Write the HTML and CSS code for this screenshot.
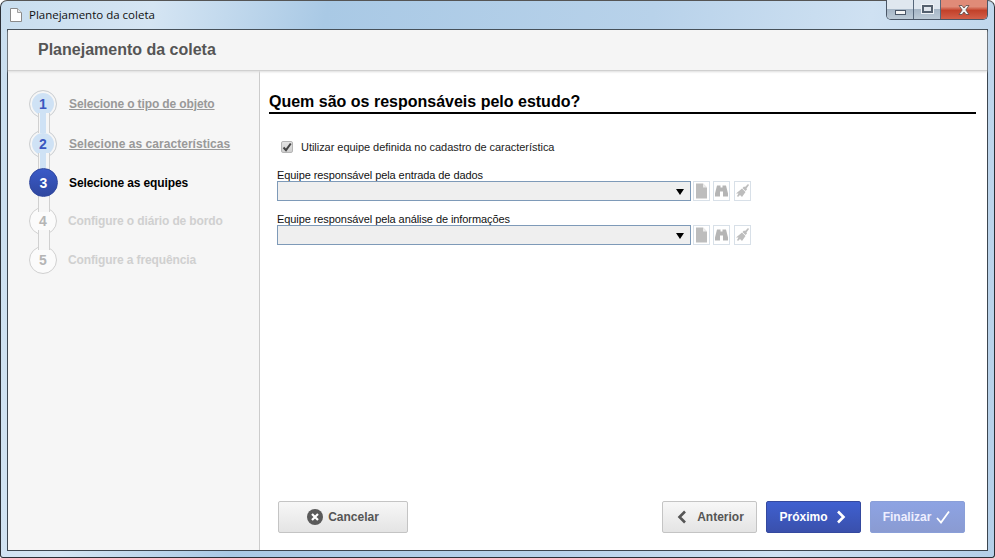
FILE: index.html
```html
<!DOCTYPE html>
<html lang="pt">
<head>
<meta charset="utf-8">
<title>Planejamento da coleta</title>
<link rel="stylesheet" href="styles.css">
</head>
<body>
<div class="window">
  <div class="titlebar">
    <svg class="doc-icon" width="12" height="14" viewBox="0 0 12 14"><path d="M.5.5h7l4 4v9H.5z" fill="#fff" stroke="#8a8a8a"/><path d="M7.500.5v4h4" fill="#e8e8e8" stroke="#a0a0a0"/></svg>
    <span class="title-text">Planejamento da coleta</span>
    <div class="controls">
      <div class="ctl ctl-min"><span class="min-glyph"></span></div>
      <div class="ctl ctl-max"><span class="max-glyph"></span></div>
      <div class="ctl ctl-close">
        <svg width="16" height="12" viewBox="0 0 16 12"><path d="M3 1.500h3l2 2.500 2-2.500h3L9.800 6 13 10.500h-3L8 8l-2 2.500H3L6.200 6z" fill="#f2f2f2" stroke="#5b4a48" stroke-width=".8"/></svg>
      </div>
    </div>
  </div>
  <div class="client">
    <header class="app-header"><h1>Planejamento da coleta</h1></header>
    <div class="body">
      <nav class="sidebar">
        <div class="step done"><span class="num">1</span><span class="lbl">Selecione o tipo de objeto</span></div>
        <div class="step done wide"><span class="num">2</span><span class="lbl">Selecione as características</span></div>
        <div class="step active"><span class="num">3</span><span class="lbl">Selecione as equipes</span></div>
        <div class="step off"><span class="num">4</span><span class="lbl">Configure o diário de bordo</span></div>
        <div class="step off last"><span class="num">5</span><span class="lbl">Configure a frequência</span></div>
      </nav>
      <main class="content">
        <h2>Quem são os responsáveis pelo estudo?</h2>
        <div class="check-row">
          <span class="checkbox"><svg width="10" height="10" viewBox="0 0 10 10"><path d="M1.500 5.500 4 8.200 8.800 1.500" fill="none" stroke="#444" stroke-width="2"/></svg></span>
          <span>Utilizar equipe definida no cadastro de característica</span>
        </div>
        <div class="field">
          <label class="field-label">Equipe responsável pela entrada de dados</label>
          <div class="field-row">
            <div class="select"><span class="arrow"></span></div>
            <span class="tool"><svg width="13" height="16" viewBox="0 0 13 16"><path d="M1 .5h7l4 4v11H1z" fill="#bdbdbd"/><path d="M8 .5v4h4z" fill="#ececec"/></svg></span>
            <span class="tool"><svg width="13" height="12" viewBox="0 0 13 12"><path d="M2 .5h3.500v2h2v-2H11l2 8v3H8V6.500H5v5H0v-3z" fill="#b5b5b5"/></svg></span>
            <span class="tool tool-last"><svg width="15" height="15" viewBox="0 0 15 15"><path d="M14 1l-1-1-3 3-1-.5-1.500 1.500 3 3L12 5.500 11.500 4.500z" fill="#bdbdbd"/><path d="M7 4.500l3.500 3.500L7 13 5 11l-2 2-1-1 1.500-2.500L1 9.500z" fill="#bdbdbd"/></svg></span>
          </div>
        </div>
        <div class="field">
          <label class="field-label">Equipe responsável pela análise de informações</label>
          <div class="field-row">
            <div class="select"><span class="arrow"></span></div>
            <span class="tool"><svg width="13" height="16" viewBox="0 0 13 16"><path d="M1 .5h7l4 4v11H1z" fill="#bdbdbd"/><path d="M8 .5v4h4z" fill="#ececec"/></svg></span>
            <span class="tool"><svg width="13" height="12" viewBox="0 0 13 12"><path d="M2 .5h3.500v2h2v-2H11l2 8v3H8V6.500H5v5H0v-3z" fill="#b5b5b5"/></svg></span>
            <span class="tool tool-last"><svg width="15" height="15" viewBox="0 0 15 15"><path d="M14 1l-1-1-3 3-1-.5-1.500 1.500 3 3L12 5.500 11.500 4.500z" fill="#bdbdbd"/><path d="M7 4.500l3.500 3.500L7 13 5 11l-2 2-1-1 1.500-2.500L1 9.500z" fill="#bdbdbd"/></svg></span>
          </div>
        </div>
        <div class="actions">
          <button class="btn btn-cancel"><svg width="16" height="16" viewBox="0 0 16 16"><circle cx="8" cy="8" r="8" fill="#5a5a5a"/><path d="M5 5l6 6M11 5l-6 6" stroke="#fff" stroke-width="2.200"/></svg>Cancelar</button>
          <span class="spacer"></span>
          <button class="btn btn-prev"><svg width="10" height="14" viewBox="0 0 10 14"><path d="M8 1.500 2.500 7 8 12.500" fill="none" stroke="#555" stroke-width="2.600"/></svg>Anterior</button>
          <button class="btn btn-next">Próximo<svg width="10" height="14" viewBox="0 0 10 14"><path d="M2 1.500 7.500 7 2 12.500" fill="none" stroke="#fff" stroke-width="2.600"/></svg></button>
          <button class="btn btn-finish">Finalizar<svg width="14" height="14" viewBox="0 0 14 14"><path d="M1 8l4 4.500L13 1.500" fill="none" stroke="#fff" stroke-width="1.800"/></svg></button>
        </div>
      </main>
    </div>
  </div>
</div>
</body>
</html>
```
FILE: styles.css
```css
* { box-sizing: border-box; }
html, body { margin: 0; height: 100%; }
body { width: 995px; height: 558px; overflow: hidden; background: #fff; font-family: "Liberation Sans", Arial, sans-serif; }
.window {
  width: 995px; height: 558px; display: flex; flex-direction: column;
  padding: 0 6px 6px 6px;
  border: 1px solid #2b2f36; border-radius: 7px 7px 3px 3px; border-top-color: #555;
  background: linear-gradient(100deg, #c9deef 0%, #d5e5f3 14%, #a9c9e5 30%, #b8d2ea 60%, #cfe1f2 80%, #b4cfe8 100%);
}
.titlebar { height: 28px; flex: none; display: flex; align-items: center; margin-left: 3px; position: relative; }
.doc-icon { margin-right: 7px; margin-top: -1px; }
.title-text { font: 11.5px "Open Sans", "Noto Sans", sans-serif; color: #111; margin-top: -1px; }
.controls { margin-left: auto; align-self: flex-start; margin-top: -1px; display: flex; height: 20px; border: 1px solid #4a5666; border-top: 0; border-radius: 0 0 5px 5px; overflow: hidden; width: 102px; }
.ctl { display: flex; align-items: center; justify-content: center; }
.ctl-min, .ctl-max { width: 27px; border-right: 1px solid #56677a; background: linear-gradient(#dfe7ef 0 45%, #a6b6c6 50%, #bccad6 100%); }
.ctl-close { flex: 1; background: linear-gradient(#e08b78 0 35%, #c2412a 55%, #d3604a 100%); }
.min-glyph { width: 11px; height: 5px; background: #f4f4f4; border: 1px solid #4a5666; margin-top: 5px; }
.max-glyph { width: 11px; height: 8px; border: 2px solid #54606e; background: #dfe5ec; outline: 1px solid #eef2f6; margin-top: -2px; }
.client { flex: 1; display: flex; flex-direction: column; background: #fff; border: 1px solid #3c4650; min-height: 0; }
.app-header { height: 41px; flex: none; background: #f5f5f5; border-bottom: 1px solid #d0d0d0; box-shadow: 0 1px 2px #ddd; display: flex; align-items: center; padding-left: 30px; position: relative; }
.app-header h1 { margin: 0 0 1px; font-size: 16px; font-weight: bold; color: #555; }
.body { flex: 1; display: flex; min-height: 0; }
.sidebar { width: 252px; flex: none; background: #f6f6f6; border-right: 1px solid #ccc; padding-top: 13px; padding-left: 21px; }
.step { height: 39px; display: flex; align-items: center; gap: 12px; position: relative; font-size: 12px; font-weight: bold; letter-spacing: -.12px; }
.step.wide { letter-spacing: .04px; margin-top: 1px; }
.step.active { margin-bottom: -1px; }
.num { width: 28px; height: 28px; border-radius: 50%; display: flex; align-items: center; justify-content: center; font-size: 14px; font-weight: bold; letter-spacing: 0; background: #f6f6f6; border: 1px solid #d0d0d0; position: relative; z-index: 1; flex: none; }
.step::after { content: ""; position: absolute; left: 9px; top: 29px; width: 10px; height: 20px; background: #f6f6f6; border: solid #d0d0d0; border-width: 0 1px; z-index: 2; }
.step.last::after { display: none; }
.done .num { background: #cfe2f5; box-shadow: inset 0 0 0 2px #f6f6f6; color: #3a57c0; }
.done::after { background: linear-gradient(90deg, #f6f6f6 0 1px, #cfe2f5 1px 7px, #f6f6f6 7px); }
.done .lbl { color: #999; text-decoration: underline; }
.active .num { background: linear-gradient(#3a5ac8, #2f479f); color: #fff; border-color: #2f479f; width: 29px; height: 29px; margin-right: -1px; z-index: 3; }
.active .lbl { color: #000; font-weight: bold; }
.off .num { color: #b5b5b5; background: #fbfbfb; }
.off .lbl { color: #d0d0d0; margin-left: -1px; }
.content { flex: 1; display: flex; flex-direction: column; padding: 21px 11px 17px 9px; min-width: 0; }
.content h2 { margin: 0; font-size: 16px; font-weight: bold; color: #000; border-bottom: 2px solid #000; height: 22px; line-height: 20px; }
.check-row { display: flex; align-items: center; gap: 8px; margin: 24px 0 0 12px; font-size: 11px; color: #222; height: 18px; letter-spacing: -.04px; }
.checkbox { width: 12px; height: 12px; border-radius: 2px; border: 1px solid #b5b5b5; background: linear-gradient(#e4e4e4, #cfcfcf); display: flex; align-items: center; justify-content: center; }
.field { margin: 6px 0 0 8px; }
.field + .field { margin-top: 5px; }
.field-label { display: block; font-size: 11px; color: #111; line-height: 12px; margin-top: 7px; letter-spacing: -.08px; }
.field-row { display: flex; align-items: center; gap: 3px; }
.select { width: 414px; height: 20px; background: #efefef; border: 1px solid #7e9ab8; display: flex; align-items: center; justify-content: flex-end; padding-right: 6px; margin-right: -1px; }
.arrow { width: 0; height: 0; border: 4px solid transparent; border-top: 6px solid #000; border-bottom: 0; margin-top: 1px; }
.tool { width: 17px; height: 20px; border: 1px solid #d8e0e8; display: flex; align-items: center; justify-content: center; background: #fff; }
.tool-last { margin-left: 1px; }
.actions { margin-top: auto; display: flex; gap: 9px; padding: 0 11px 0 9px; }
.spacer { flex: 1; }
.btn { height: 32px; font: bold 12px "Liberation Sans", Arial, sans-serif; border-radius: 2px; display: flex; align-items: center; justify-content: center; padding: 0; }
.btn-cancel { width: 130px; gap: 5px; color: #555; background: linear-gradient(#f7f7f7, #e4e4e4); border: 1px solid #c4c4c4; }
.btn-prev { width: 95px; gap: 10px; padding-left: 2px; color: #555; background: linear-gradient(#f7f7f7, #e4e4e4); border: 1px solid #c4c4c4; }
.btn-next { width: 95px; gap: 8px; padding-right: 2px; color: #fff; background: linear-gradient(#3f60d0, #3a50ac); border: 1px solid #34499f; }
.btn-finish { width: 95px; gap: 5px; padding-right: 2px; color: #eef; background: linear-gradient(#8da3e3, #8a9bd2); border: 1px solid #8a9fd8; }
```
